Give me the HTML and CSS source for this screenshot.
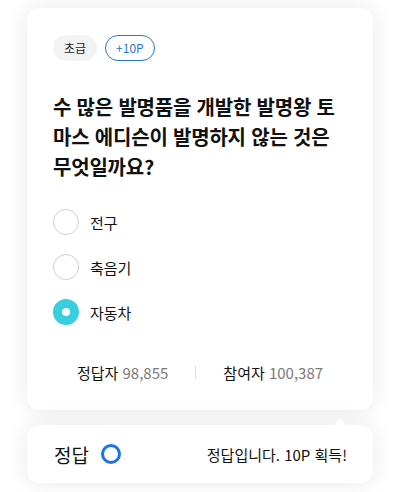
FILE: index.html
```html
<!DOCTYPE html>
<html lang="ko">
<head>
<meta charset="utf-8">
<link rel="stylesheet" href="styles.css">
</head>
<body>
<div class="wrap">
  <div class="card quiz">
    <div class="tags">
      <span class="tag level">초급</span>
      <span class="tag point">+10P</span>
    </div>
    <h1 class="question">수 많은 발명품을 개발한 발명왕 토마스 에디슨이 발명하지 않는 것은 무엇일까요?</h1>
    <ul class="options">
      <li class="option"><span class="radio"></span><span>전구</span></li>
      <li class="option"><span class="radio"></span><span>축음기</span></li>
      <li class="option selected"><span class="radio"></span><span>자동차</span></li>
    </ul>
    <div class="stats">
      <span class="stat"><b>정답자</b> <em>98,855</em></span>
      <span class="divider"></span>
      <span class="stat"><b>참여자</b> <em>100,387</em></span>
    </div>
  </div>
  <div class="card result">
    <span class="answer">정답</span>
    <span class="ring"></span>
    <span class="msg">정답입니다. 10P 획득!</span>
  </div>
</div>
</body>
</html>
```
FILE: styles.css
```css
* { box-sizing: border-box; }
html, body { margin: 0; padding: 0; background: #fff; }
body {
  font-family: "Noto Sans CJK KR", "Noto Sans", sans-serif;
  color: #111;
}
.wrap {
  padding: 8px 27px 9px;
  display: flex;
  flex-direction: column;
  gap: 15px;
}
.card {
  background: #fff;
  border-radius: 12px;
  box-shadow: 0 0 24px rgba(0,0,0,0.09);
}
.quiz {
  height: 402px;
  padding: 27px 26px 0;
  display: flex;
  flex-direction: column;
}
.tags { display: flex; gap: 8px; }
.tag {
  height: 26px;
  border-radius: 13px;
  font-size: 12px;
  line-height: 26px;
  padding: 0 11px;
}
.level { background: #f3f3f3; color: #222; }
.point { border: 1px solid #2a74d6; color: #2a74d6; line-height: 24px; padding: 0 10px; }
.question {
  margin: 31px 0 0;
  font-size: 20px;
  font-weight: 700;
  line-height: 30px;
  letter-spacing: -0.2px;
}
.options {
  list-style: none;
  margin: 27px 0 0;
  padding: 0;
  display: flex;
  flex-direction: column;
  gap: 19px;
}
.option {
  display: flex;
  align-items: center;
  gap: 11px;
  font-size: 15px;
  height: 26px;
}
.radio {
  width: 26px;
  height: 26px;
  border-radius: 50%;
  border: 1px solid #cfcfcf;
  background: #fff;
}
.selected .radio {
  border: 9px solid #39cde0;
  background: #fff;
}
.stats {
  margin-top: 37px;
  display: flex;
  justify-content: center;
  align-items: center;
  gap: 27px;
  font-size: 15px;
}
.stat b { font-weight: 400; color: #111; }
.stat em { font-style: normal; color: #7a7a7a; }
.divider { width: 1px; height: 13px; background: #ddd; }
.result {
  position: relative;
  height: 58px;
  display: flex;
  align-items: center;
  padding: 0 26px 0 27px;
}
.result::before {
  content: "";
  position: absolute;
  top: -6px;
  right: 27px;
  border-left: 6px solid transparent;
  border-right: 6px solid transparent;
  border-bottom: 6px solid #fff;
}
.answer { font-size: 19px; }
.ring {
  margin-left: 12px;
  width: 20px;
  height: 20px;
  border-radius: 50%;
  border: 3px solid #1a73e8;
}
.msg { margin-left: auto; font-size: 15px; }
```
